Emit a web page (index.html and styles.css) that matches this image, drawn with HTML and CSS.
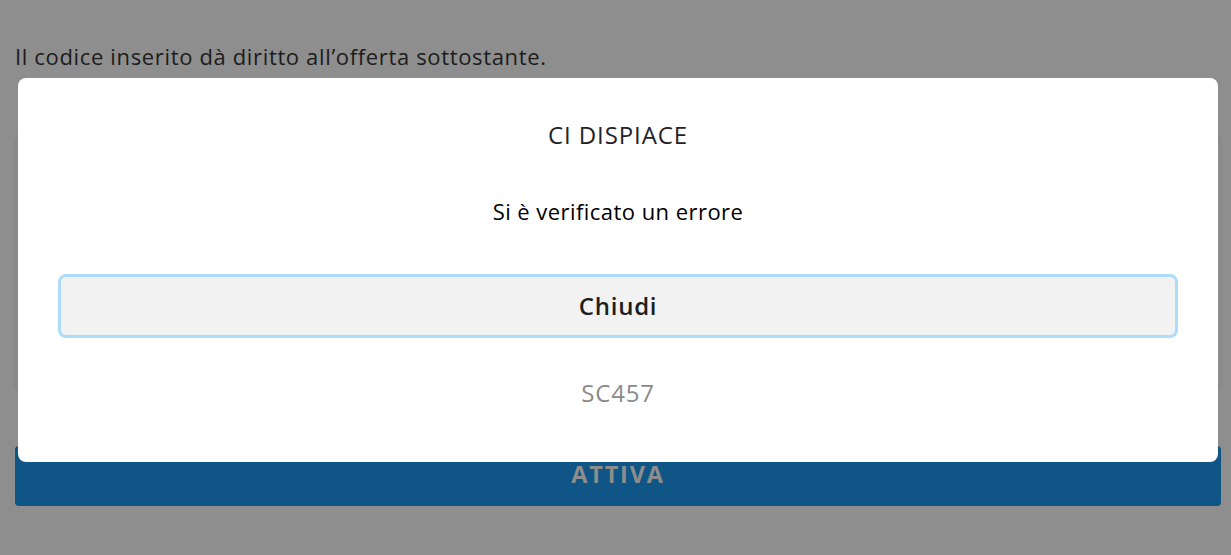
FILE: index.html
```html
<!DOCTYPE html>
<html lang="it">
<head>
<meta charset="utf-8">
<title>Codice</title>
<link rel="stylesheet" href="styles.css">
</head>
<body>
<main class="page">
  <p class="intro">Il codice inserito dà diritto all’offerta sottostante.</p>
  <div class="offer-card"></div>
  <button class="activate" type="button">ATTIVA</button>
</main>
<div class="overlay">
  <div class="modal" role="dialog">
    <h2 class="modal-title">CI DISPIACE</h2>
    <p class="modal-msg">Si è verificato un errore</p>
    <button class="close-btn" type="button">Chiudi</button>
    <p class="modal-code">SC457</p>
  </div>
</div>
</body>
</html>
```
FILE: styles.css
```css
html, body {
  margin: 0;
  padding: 0;
  background: #8e8e8e;
  font-family: "Open Sans", "Lato", sans-serif;
  height: 100%;
  overflow: hidden;
}
.page {
  padding: 39px 10px 0 15px;
  display: flex;
  flex-direction: column;
}
.intro {
  margin: 0;
  font-size: 22px;
  line-height: 34px;
  letter-spacing: 0.65px;
  color: #1c1c1c;
}
.offer-card {
  margin-top: 64px;
  height: 253px;
  border-radius: 6px;
  background: #8b8b8b;
  box-shadow: 0 0 3px rgba(0,0,0,0.12);
}
.activate {
  margin-top: 56px;
  height: 60px;
  border: none;
  border-radius: 4px;
  background: #0f5586;
  color: #8d8d8d;
  font-family: inherit;
  font-weight: 700;
  font-size: 23.5px;
  letter-spacing: 1.8px;
  padding: 0 0 4px;
}
.overlay {
  position: fixed;
  inset: 0;
  display: flex;
  justify-content: flex-start;
  align-items: flex-start;
  padding: 78px 0 0 18px;
}
.modal {
  width: 1200px;
  height: 384px;
  box-sizing: border-box;
  background: #fff;
  border-radius: 8px;
  padding: 38px 40px 0;
  display: flex;
  flex-direction: column;
  align-items: stretch;
  text-align: center;
}
.modal-title {
  margin: 0;
  font-weight: 400;
  font-size: 24px;
  line-height: 38px;
  letter-spacing: 0.9px;
  color: #1e2328;
}
.modal-msg {
  margin: 39px 0 0;
  font-size: 22px;
  line-height: 36px;
  letter-spacing: 0.45px;
  color: #000;
}
.close-btn {
  margin-top: 45px;
  height: 64px;
  box-sizing: border-box;
  border: 3px solid #acdcfa;
  border-radius: 8px;
  background: #f2f2f2;
  color: #1e1e1e;
  font-family: inherit;
  font-weight: 600;
  font-size: 24px;
  letter-spacing: 0.75px;
  padding: 0 0 2px;
}
.modal-code {
  margin: 37px 0 0;
  font-size: 24px;
  line-height: 36px;
  letter-spacing: 0.8px;
  color: #8a8a8a;
}
```
